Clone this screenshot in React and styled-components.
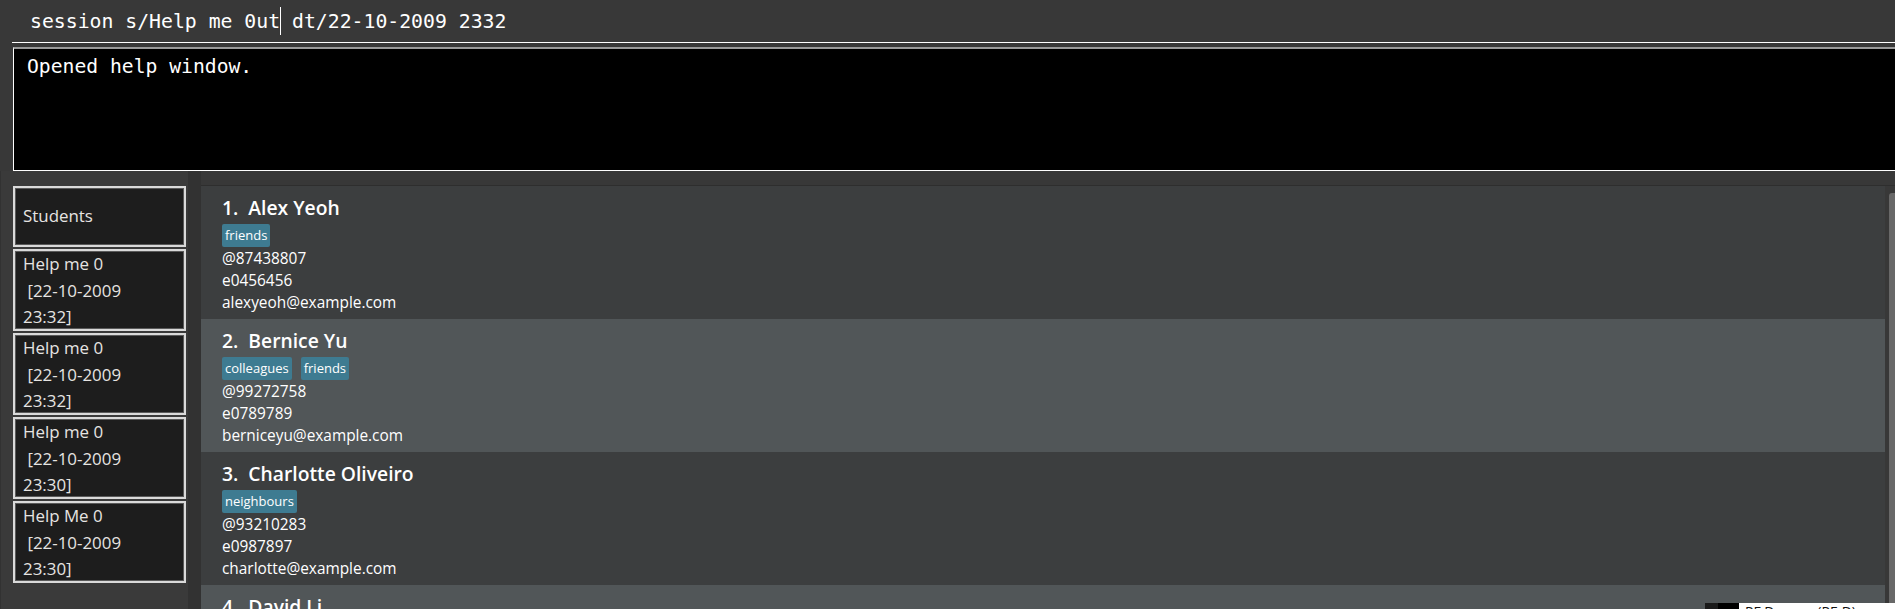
import React from 'react';
import styled, { createGlobalStyle } from 'styled-components';

const GlobalStyle = createGlobalStyle`
    html, body {
        margin: 0;
        padding: 0;
        background-color: #383838;
        width: 1895px;
        height: 609px;
        overflow: hidden;
    }
    * {
        box-sizing: border-box;
    }
`;

const sessions = [
    { name: 'Help me 0', date: '22-10-2009', time: '23:32' },
    { name: 'Help me 0', date: '22-10-2009', time: '23:32' },
    { name: 'Help me 0', date: '22-10-2009', time: '23:30' },
    { name: 'Help Me 0', date: '22-10-2009', time: '23:30' },
];

const persons = [
    { name: 'Alex Yeoh', tags: ['friends'], phone: '87438807', id: 'e0456456', email: 'alexyeoh@example.com' },
    { name: 'Bernice Yu', tags: ['colleagues', 'friends'], phone: '99272758', id: 'e0789789', email: 'berniceyu@example.com' },
    { name: 'Charlotte Oliveiro', tags: ['neighbours'], phone: '93210283', id: 'e0987897', email: 'charlotte@example.com' },
    { name: 'David Li', tags: ['family'], phone: '91031282', id: 'e0123123', email: 'lidavid@example.com' },
];

function App() {
    return (
        <Page>
            <GlobalStyle />

            {/* COMMAND BOX */}
            <CommandBar>
                <CommandText>
                    session s/Help me 0ut<Caret /> dt/22-10-2009 2332
                </CommandText>
            </CommandBar>

            {/* RESULT DISPLAY */}
            <ResultDisplay>Opened help window.</ResultDisplay>

            <Main>
                {/* SESSION LIST */}
                <Sidebar>
                    <SideBox $header>Students</SideBox>
                    {sessions.map((s, i) => (
                        <SideBox key={i}>
                            {s.name}{'\n'} [{s.date}{'\n'}{s.time}]
                        </SideBox>
                    ))}
                </Sidebar>

                <Gutter />

                {/* PERSON LIST */}
                <ListArea>
                    <ListBody>
                        <Cards>
                            {persons.map((p, i) => (
                                <Card key={p.name} $odd={i % 2 === 1}>
                                    <Name>
                                        <Index>{i + 1}.</Index>
                                        {p.name}
                                    </Name>
                                    <Tags>
                                        {p.tags.map((t) => (
                                            <Tag key={t}>{t}</Tag>
                                        ))}
                                    </Tags>
                                    <Detail>@{p.phone}</Detail>
                                    <Detail>{p.id}</Detail>
                                    <Detail>{p.email}</Detail>
                                </Card>
                            ))}
                        </Cards>
                        <ScrollTrack>
                            <Thumb />
                        </ScrollTrack>
                    </ListBody>
                </ListArea>
            </Main>

            {/* WINDOW PEEKING IN FROM BELOW */}
            <Popup>
                <PopupIcon />
                <PopupLabel>PF Dry run (PF-D)</PopupLabel>
            </Popup>
        </Page>
    );
}

export default App;

const Page = styled.div`
    position: relative;
    width: 1895px;
    height: 609px;
    overflow: hidden;
    background-color: #383838;
    display: flex;
    flex-direction: column;
`;

const CommandBar = styled.div`
    height: 43px;
    margin-left: 12px;
    padding-left: 18px;
    border-bottom: 1px solid #ffffff;
    display: flex;
    align-items: center;
`;

const CommandText = styled.div`
    font-family: "DejaVu Sans Mono", "Liberation Mono", monospace;
    font-size: 19.8px;
    color: #ffffff;
    white-space: pre;
    padding-bottom: 1px;
`;

const Caret = styled.span`
    display: inline-block;
    width: 0;
    height: 28px;
    margin-right: -1px;
    border-left: 1px solid #ffffff;
    vertical-align: -7px;
`;

const ResultDisplay = styled.div`
    margin-top: 4px;
    margin-left: 13px;
    height: 124px;
    background-color: #000000;
    border-top: 2px solid #9a9a9a;
    border-left: 1px solid #ffffff;
    border-bottom: 1px solid #ffffff;
    padding: 5px 13px;
    font-family: "DejaVu Sans Mono", "Liberation Mono", monospace;
    font-size: 19.7px;
    line-height: 26px;
    color: #ffffff;
`;

const Main = styled.div`
    flex: 1;
    display: flex;
    min-height: 0;
`;

const Sidebar = styled.div`
    width: 188px;
    padding: 15px 0 0 12px;
    background-color: #3a3a3a;
    border-left: 1px solid #323232;
    display: flex;
    flex-direction: column;
    gap: 2px;
`;

const SideBox = styled.div`
    width: 173px;
    height: ${(p) => (p.$header ? '61px' : '82px')};
    flex-shrink: 0;
    background-color: #1d1d1d;
    border: 2px solid #dadada;
    box-shadow: inset 0 0 0 1px #5a5a5a;
    padding: 0 7px 0 8px;
    display: flex;
    align-items: ${(p) => (p.$header ? 'center' : 'flex-start')};
    font-family: "Open Sans", "Noto Sans", sans-serif;
    font-size: 16.9px;
    line-height: 26.5px;
    color: #e6e4e2;
    white-space: pre;
    overflow: hidden;
`;

const Gutter = styled.div`
    width: 13px;
    background-color: #323232;
`;

const ListArea = styled.div`
    flex: 1;
    padding-top: 14px;
    display: flex;
    flex-direction: column;
    min-width: 0;
`;

const ListBody = styled.div`
    flex: 1;
    display: flex;
    border-top: 1px solid #2e2e2e;
    min-height: 0;
`;

const Cards = styled.div`
    flex: 1;
    display: flex;
    flex-direction: column;
    background-color: #3c3e3f;
    overflow: hidden;
`;

const Card = styled.div`
    height: 133px;
    flex-shrink: 0;
    padding: 9px 21px 0;
    background-color: ${(p) => (p.$odd ? '#515658' : '#3c3e3f')};
    display: flex;
    flex-direction: column;
    font-family: "Open Sans", "Noto Sans", sans-serif;
    color: #ffffff;
`;

const Name = styled.div`
    font-size: 19.3px;
    font-weight: 600;
    line-height: 26px;
    white-space: pre;
`;

const Index = styled.span`
    margin-right: 10px;
`;

const Tags = styled.div`
    display: flex;
    gap: 9px;
    margin-top: 3px;
    margin-bottom: 1px;
`;

const Tag = styled.span`
    height: 23px;
    padding: 0 3px;
    background-color: #3e7b91;
    border-radius: 2px;
    font-size: 13px;
    line-height: 23px;
    color: #ffffff;
`;

const Detail = styled.div`
    font-size: 15.4px;
    line-height: 22px;
    color: #ffffff;
`;

const ScrollTrack = styled.div`
    width: 10px;
    background-color: #383838;
    padding: 7px 0 0 4px;
`;

const Thumb = styled.div`
    width: 8px;
    height: 100%;
    background-color: #686868;
    border-radius: 3px 0 0 0;
`;

const Popup = styled.div`
    position: absolute;
    left: 1705px;
    top: 603px;
    right: 0;
    height: 24px;
    display: flex;
    background-color: #ffffff;
`;

const PopupIcon = styled.div`
    width: 34px;
    background: linear-gradient(to right, #1a1a1a 0 13px, #000000 13px 100%);
`;

const PopupLabel = styled.div`
    padding: 0 0 0 6px;
    font-family: "Open Sans", "Noto Sans", sans-serif;
    font-size: 14px;
    line-height: 14px;
    margin-top: 2px;
    color: #111111;
`;
